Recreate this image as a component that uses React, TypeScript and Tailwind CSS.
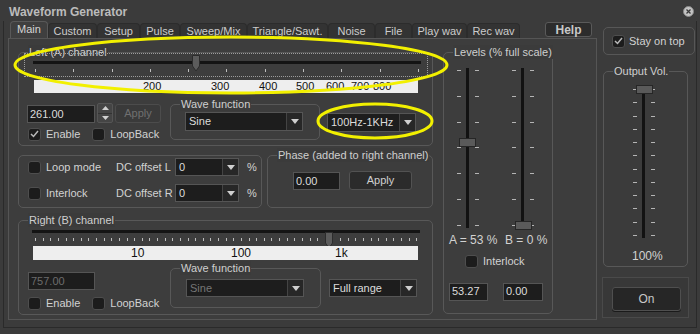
import React from "react";

type Kids = { children?: React.ReactNode; className?: string };

function Group({ label, className = "", children }: Kids & { label?: string }) {
  return (
    <div className={`relative shrink-0 rounded-[5px] border border-[#585858] ${className}`}>
      {label && (
        <span className="absolute left-[9px] top-[-8px] bg-[#3b3b3b] px-[1px] text-[11px] leading-[14px] whitespace-nowrap text-[#cfcfcf]">
          {label}
        </span>
      )}
      {children}
    </div>
  );
}

function Check({ checked = false }: { checked?: boolean }) {
  return (
    <span className="flex h-[13px] w-[13px] shrink-0 items-center justify-center rounded-[3px] border border-[#4e4e4e] bg-[#1c1c1c]">
      {checked && (
        <svg width="9" height="8" viewBox="0 0 9 8">
          <path d="M1 4 L3.5 6.5 L8 1" fill="none" stroke="#b9b9b9" strokeWidth="1.5" />
        </svg>
      )}
    </span>
  );
}

function Arrow() {
  return (
    <svg width="8" height="5" viewBox="0 0 8 5">
      <path d="M0 0 H8 L4 5 Z" fill="#cfcfcf" />
    </svg>
  );
}

function Select({ value, className = "", disabled = false }: { value: string; className?: string; disabled?: boolean }) {
  return (
    <div className={`flex shrink-0 border border-[#555] bg-[#1d1d1d] ${className}`}>
      <span className={`flex-1 self-center pl-[3px] text-[11px] leading-none whitespace-nowrap ${disabled ? "text-[#767676]" : "text-[#dcdcdc]"}`}>
        {value}
      </span>
      <span className="flex w-[16px] items-center justify-center border-l border-[#444] bg-[#272727]">
        <Arrow />
      </span>
    </div>
  );
}

function Field({ value, className = "", disabled = false }: { value: string; className?: string; disabled?: boolean }) {
  return (
    <div className={`flex shrink-0 items-center border border-[#555] bg-[#1d1d1d] pl-[2px] text-[11px] leading-none ${disabled ? "text-[#6c6c6c]" : "text-[#dcdcdc]"} ${className}`}>
      {value}
    </div>
  );
}

function Btn({ label, className = "", disabled = false }: { label: string; className?: string; disabled?: boolean }) {
  return (
    <div className={`flex shrink-0 items-center justify-center rounded-[3px] border text-[11px] leading-none ${disabled ? "border-[#4c4c4c] bg-[#3a3a3a] text-[#707070]" : "border-[#525252] bg-[#2b2b2b] text-[#d0d0d0]"} ${className}`}>
      {label}
    </div>
  );
}

function HThumb({ className = "" }: { className?: string }) {
  return (
    <svg className={className} width="10" height="17" viewBox="0 0 10 17">
      <path d="M1.5 0.5 H8.5 V11 L5 16 L1.5 11 Z" fill="#5c5c5c" stroke="#2c2c2c" />
    </svg>
  );
}

function Ticks({ count }: { count: number }) {
  return (
    <>
      {Array.from({ length: count }).map((_, i) => (
        <span key={i} className="h-[3px] w-px bg-[#bdbdbd]" />
      ))}
    </>
  );
}

function VSlider({ rows, height, thumb, pad }: { rows: number; height: string; thumb: string; pad: string }) {
  const col = (ml: string) => (
    <div className={`flex w-[4px] flex-col justify-between ${pad} ${ml}`}>
      {Array.from({ length: rows }).map((_, i) => (
        <span key={i} className="h-px w-[4px] bg-[#b5b5b5]" />
      ))}
    </div>
  );
  return (
    <div className={`relative flex shrink-0 ${height}`}>
      {col("")}
      <div className="ml-[5px] w-[3px] bg-[#121212]" />
      {col("ml-[6px]")}
      <div className={`absolute h-[9px] w-[17px] border border-[#262626] bg-[#5a5a5a] ${thumb}`} />
    </div>
  );
}

const tabs = [
  { t: "Main", w: "w-[38px]" },
  { t: "Custom", w: "w-[49px]" },
  { t: "Setup", w: "w-[43px]" },
  { t: "Pulse", w: "w-[40px]" },
  { t: "Sweep/Mix", w: "w-[67px]" },
  { t: "Triangle/Sawt.", w: "w-[81px]" },
  { t: "Noise", w: "w-[47px]" },
  { t: "File", w: "w-[37px]" },
  { t: "Play wav", w: "w-[55px]" },
  { t: "Rec wav", w: "w-[53px]" },
];

const leftScale = [
  { t: "200", l: "left-[109px]" },
  { t: "300", l: "left-[177px]" },
  { t: "400", l: "left-[225px]" },
  { t: "500", l: "left-[262px]" },
  { t: "600", l: "left-[292px]" },
  { t: "700", l: "left-[317px]" },
  { t: "800", l: "left-[339px]" },
];

const rightScale = [
  { t: "10", l: "left-[98px]" },
  { t: "100", l: "left-[198px]" },
  { t: "1k", l: "left-[302px]" },
];

export default function App() {
  return (
    <div className="relative h-[334px] w-[700px] overflow-hidden bg-[#3b3b3b] font-['Liberation_Sans',Arial,sans-serif] text-[11px] text-[#d2d2d2]">
      {/* Title bar */}
      <div className="flex h-[21px] items-center justify-between pl-[9px] pr-[6px] pt-[2px]">
        <span className="text-[12px] font-bold text-[#bcbcbc]">Waveform Generator</span>
        <span className="flex h-[11px] w-[11px] items-center justify-center rounded-full border border-[#8a8a8a] bg-[#c4c4c4]">
          <svg width="5" height="5" viewBox="0 0 5 5">
            <path d="M0.5 0.5 L4.5 4.5 M4.5 0.5 L0.5 4.5" stroke="#3a3a3a" strokeWidth="1.3" />
          </svg>
        </span>
      </div>

      {/* Window body */}
      <div className="mx-[3px] h-[307px] border-x border-b border-[#2a2a2a]">
        <div className="flex">
          <div className="ml-[4px] w-[589px] shrink-0">
            {/* Tabs */}
            <div className="flex h-[17px] items-end pl-[2px]">
              {tabs.map((tab, i) =>
                i === 0 ? (
                  <div key={tab.t} className={`flex h-[17px] items-center justify-center rounded-t-[4px] border-x border-t border-[#595959] bg-[#3f3f3f] pb-[1px] text-[11px] text-[#d4d4d4] ${tab.w}`}>
                    {tab.t}
                  </div>
                ) : (
                  <div key={tab.t} className={`flex h-[15px] items-center justify-center rounded-t-[4px] border-x border-t border-[#2c2c2c] bg-[#333333] text-[11px] text-[#cccccc] ${tab.w}`}>
                    {tab.t}
                  </div>
                )
              )}
              <div className="mb-[1px] ml-auto mr-[5px] flex h-[15px] w-[47px] items-center justify-center rounded-[3px] border border-[#5a5a5a] bg-[#2c2c2c] text-[12px] font-bold text-[#c8c8c8]">
                Help
              </div>
            </div>

            {/* Main panel */}
            <div className="flex h-[282px] border border-[#555] bg-[#3d3d3d] pl-[9px] pt-[13px]">
              <div className="flex w-[415px] shrink-0 flex-col">
                {/* Left channel */}
                <Group label="Left (A) channel" className="h-[94px] w-[415px]">
                  <div className="relative ml-[5px] h-[24px] w-[404px] border border-dotted border-[#9c9c9c]">
                    <div className="ml-[8px] mt-[7px] h-[3px] w-[388px] bg-[#141414]" />
                    <div className="ml-[10px] mt-[5px] flex w-[384px] justify-between">
                      <Ticks count={11} />
                    </div>
                    <HThumb className="absolute left-[166px] top-[1px]" />
                  </div>
                  <div className="relative ml-[15px] mt-[3px] h-[13px] w-[384px] overflow-hidden bg-[#eeeeee] text-[11px] leading-[13px] text-[#111]">
                    {leftScale.map((s) => (
                      <span key={s.t} className={`absolute top-0 ${s.l}`}>
                        {s.t}
                      </span>
                    ))}
                  </div>
                  <div className="mt-[11px] flex items-start">
                    <div className="w-[151px] shrink-0 pl-[8px] pt-[1px]">
                      <div className="flex items-start">
                        <Field value="261.00" className="h-[18px] w-[68px]" />
                        <div className="ml-[2px] -mt-[2px] flex h-[20px] w-[16px] flex-col rounded-[2px] border border-[#555] bg-[#454545]">
                          <span className="flex flex-1 items-center justify-center border-b border-[#333]">
                            <svg width="7" height="4" viewBox="0 0 7 4"><path d="M0 4 H7 L3.5 0 Z" fill="#d0d0d0" /></svg>
                          </span>
                          <span className="flex flex-1 items-center justify-center">
                            <svg width="7" height="4" viewBox="0 0 7 4"><path d="M0 0 H7 L3.5 4 Z" fill="#d0d0d0" /></svg>
                          </span>
                        </div>
                        <Btn label="Apply" disabled className="-mt-[1px] ml-[2px] h-[19px] w-[46px]" />
                      </div>
                      <div className="mt-[3px] flex items-center">
                        <span className="ml-[1px]"><Check checked /></span>
                        <span className="ml-[5px]">Enable</span>
                        <span className="ml-[12px]"><Check /></span>
                        <span className="ml-[5px]">LoopBack</span>
                      </div>
                    </div>
                    <Group label="Wave function" className="h-[36px] w-[150px]">
                      <Select value="Sine" className="ml-[14px] mt-[7px] h-[19px] w-[118px]" />
                    </Group>
                    <Select value="100Hz-1KHz" className="ml-[7px] mt-[9px] h-[19px] w-[89px]" />
                  </div>
                </Group>

                {/* Loop + phase */}
                <div className="mt-[9px] flex">
                  <Group className="h-[53px] w-[244px]">
                    {[
                      { a: "Loop mode", b: "DC offset L" },
                      { a: "Interlock", b: "DC offset R" },
                    ].map((r, i) => (
                      <div key={r.a} className={`flex h-[18px] items-center ${i === 0 ? "mt-[2px]" : "mt-[8px]"}`}>
                        <span className="ml-[9px]"><Check /></span>
                        <span className="ml-[5px] w-[70px]">{r.a}</span>
                        <span className="w-[59px] whitespace-nowrap">{r.b}</span>
                        <Select value="0" className="h-[18px] w-[64px]" />
                        <span className="ml-[8px]">%</span>
                      </div>
                    ))}
                  </Group>
                  <Group label="Phase (added to right channel)" className="ml-[5px] h-[53px] w-[166px]">
                    <div className="ml-[25px] mt-[16px] flex items-start">
                      <Field value="0.00" className="h-[18px] w-[47px]" />
                      <Btn label="Apply" className="-mt-[1px] ml-[9px] h-[19px] w-[63px]" />
                    </div>
                  </Group>
                </div>

                {/* Right channel */}
                <Group label="Right (B) channel" className="mt-[12px] h-[95px] w-[415px]">
                  <div className="relative">
                    <div className="ml-[13px] mt-[9px] h-[3px] w-[388px] bg-[#141414]" />
                    <div className="ml-[16px] mt-[5px] flex w-[383px] justify-between">
                      <Ticks count={51} />
                    </div>
                    <HThumb className="absolute left-[305px] top-[2px]" />
                  </div>
                  <div className="relative ml-[14px] mt-[5px] h-[14px] w-[385px] overflow-hidden bg-[#eeeeee] text-[12px] leading-[14px] text-[#111]">
                    {rightScale.map((s) => (
                      <span key={s.t} className={`absolute top-0 ${s.l}`}>
                        {s.t}
                      </span>
                    ))}
                  </div>
                  <div className="mt-[8px] flex items-start">
                    <div className="w-[151px] shrink-0 pl-[9px] pt-[4px]">
                      <Field value="757.00" disabled className="h-[18px] w-[67px]" />
                      <div className="mt-[5px] flex items-center">
                        <Check />
                        <span className="ml-[5px]">Enable</span>
                        <span className="ml-[12px]"><Check /></span>
                        <span className="ml-[5px]">LoopBack</span>
                      </div>
                    </div>
                    <Group label="Wave function" className="h-[40px] w-[151px]">
                      <Select value="Sine" disabled className="ml-[15px] mt-[10px] h-[18px] w-[118px]" />
                    </Group>
                    <Select value="Full range" className="ml-[8px] mt-[11px] h-[18px] w-[88px]" />
                  </div>
                </Group>
              </div>

              {/* Levels */}
              <Group label="Levels (% full scale)" className="ml-[10px] h-[262px] w-[110px]">
                <div className="ml-[13px] mt-[15px] flex">
                  <VSlider rows={7} height="h-[160px]" pad="pt-[2px] pb-[2px]" thumb="left-[2px] top-[70px]" />
                  <div className="ml-[33px]">
                    <VSlider rows={7} height="h-[160px]" pad="pt-[2px] pb-[2px]" thumb="left-[3px] top-[153px]" />
                  </div>
                </div>
                <div className="mt-[5px] flex h-[14px] items-center whitespace-pre text-[12px]">
                  <span className="ml-[5px] w-[56px]">A = 53 %</span>
                  <span>B = 0 %</span>
                </div>
                <div className="mt-[6px] flex items-center">
                  <span className="ml-[21px]"><Check /></span>
                  <span className="ml-[5px]">Interlock</span>
                </div>
                <div className="mt-[13px] flex">
                  <Field value="53.27" className="ml-[5px] h-[18px] w-[39px]" />
                  <Field value="0.00" className="ml-[15px] h-[18px] w-[40px]" />
                </div>
              </Group>
            </div>
          </div>

          {/* Right column */}
          <div className="ml-[5px] flex w-[94px] shrink-0 flex-col">
            <div className="ml-[1px] mt-[6px] flex h-[28px] w-[92px] items-center rounded-[5px] border border-[#575757]">
              <span className="ml-[8px]"><Check checked /></span>
              <span className="ml-[4px] text-[11px]">Stay on top</span>
            </div>
            <Group label="Output Vol." className="ml-[1px] mt-[16px] h-[196px] w-[85px]">
              <div className="ml-[29px] mt-[17px]">
                <VSlider rows={12} height="h-[149px]" pad="pt-0 pb-[2px]" thumb="left-[3px] top-[-4px]" />
              </div>
              <div className="ml-[28px] mt-[11px] text-[12px] leading-[14px]">100%</div>
            </Group>
            <div className="mt-[10px] h-[41px] w-[87px] border border-[#4a4a4a] bg-[#383838] pl-[9px] pt-[9px]">
              <div className="flex h-[24px] w-[69px] items-center justify-center rounded-[3px] border border-[#4f4f4f] bg-[#262626] text-[12px] text-[#c8c8c8] shadow-[0_1px_0_#1a1a1a]">
                On
              </div>
            </div>
          </div>
        </div>
      </div>

      {/* Yellow annotation marks */}
      <svg className="pointer-events-none absolute left-0 top-0" width="700" height="334">
        <ellipse cx="231" cy="65" rx="216" ry="28" fill="none" stroke="#f2f000" strokeWidth="3" />
        <ellipse cx="375" cy="121" rx="57" ry="17" fill="none" stroke="#f2f000" strokeWidth="3" />
      </svg>
    </div>
  );
}
